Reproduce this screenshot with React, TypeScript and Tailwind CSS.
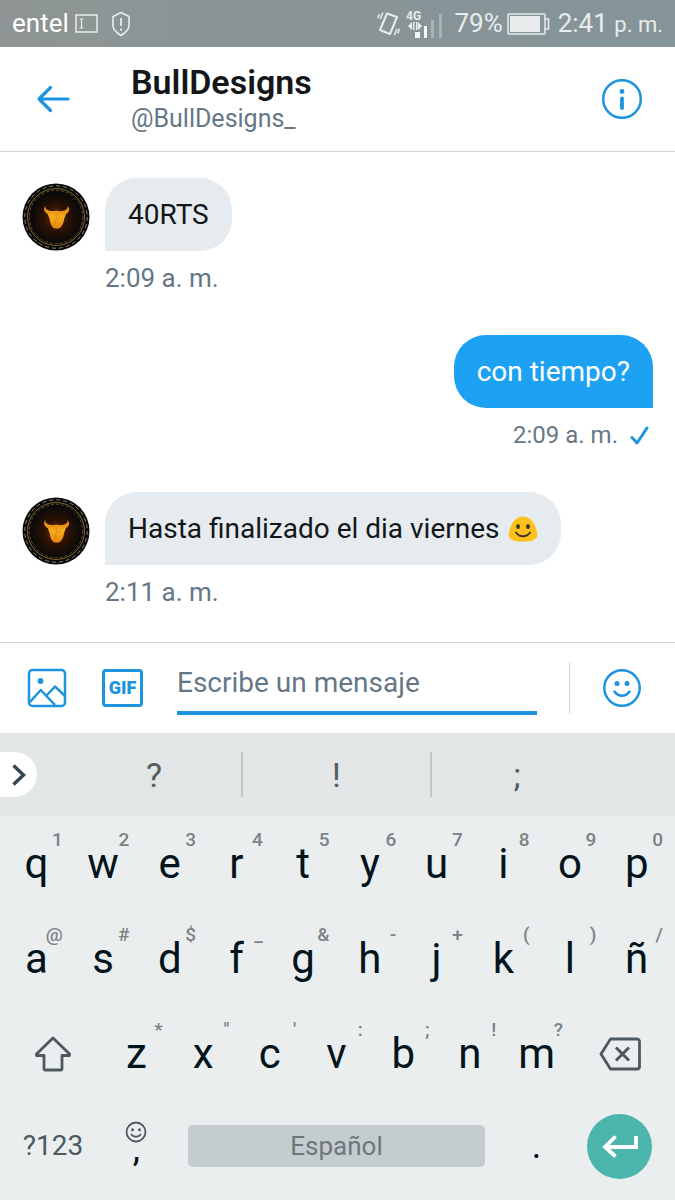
import type { ReactNode } from "react";

interface Message {
  id: number
  text: string
  time: string
  mine?: boolean
  emoji?: boolean
}

interface KeyData {
  label: string
  hint: string
}

const messages: Message[] = [
  { id: 1, text: "40RTS", time: "2:09 a. m." },
  { id: 2, text: "con tiempo?", time: "2:09 a. m.", mine: true },
  { id: 3, text: "Hasta finalizado el dia viernes", time: "2:11 a. m.", emoji: true },
];

const toKeys = (letters: string, hints: string): KeyData[] =>
  letters.split("").map((label, i) => ({ label, hint: hints[i] }));

const row1 = toKeys("qwertyuiop", "1234567890");
const row2 = toKeys("asdfghjklñ", "@#$_&-+()/");
const row3 = toKeys("zxcvbnm", "*\"':;!?");

const StatusBar = () => (
  <div className="flex h-[47px] items-center justify-between bg-linear-to-r from-[#8e9594] to-[#849499] px-3 text-[26px] text-[#e8ecec]">
    <div className="flex items-center">
      <span className="text-white">entel</span>
      <svg className="ml-1.5" width="24" height="20" viewBox="0 0 24 20" fill="none" stroke="#e8ecec" strokeWidth="1.5">
        <rect x="1" y="1" width="21" height="17" />
        <path d="M4.5 5h4M4.5 14h4M6.5 5v9" strokeWidth="1.2" />
      </svg>
      <svg className="ml-3" width="20" height="26" viewBox="0 0 20 26" fill="none" stroke="#e8ecec" strokeWidth="1.6">
        <path d="M10 1.5 18 5.5V15c0 4-4 7-8 9.500C6 22 2 19 2 15V5.500Z" strokeLinejoin="round" />
        <path d="M10 7v8M10 17.5v2.2" strokeWidth="1.8" />
      </svg>
    </div>
    <div className="flex items-center">
      <svg width="23" height="26" viewBox="0 0 23 26" fill="none" stroke="#e8ecec" strokeWidth="1.5">
        <path d="M10 2.500 20 6 13 23 3 19Z" strokeWidth="2" strokeLinejoin="round" />
        <path d="M6 1.500 3 8M2.500 3 .8 7M20 18l-2.500 6M22.500 17.500l-1.700 5" />
      </svg>
      <svg className="ml-1.5" width="36" height="30" viewBox="0 0 36 30">
        <text x="0" y="11" fontSize="12" fontWeight="700" fill="#e8ecec">4G</text>
        <path d="m2 17 4-4v8ZM7 13h1.500v8H7ZM10 13h1.500v8H10Zm2 0 4 4-4 4Z" fill="#e8ecec" />
        <path d="M9 23h5v6H9ZM18 17h3v12h-3Z" fill="#f4f6f6" />
        <path d="M25 11h3v18h-3ZM33 5h3v24h-3Z" fill="#a9b3b5" />
      </svg>
      <span className="ml-3">79%</span>
      <svg className="ml-1" width="43" height="22" viewBox="0 0 43 22">
        <rect x="1" y="1" width="37" height="20" rx="1" fill="none" stroke="#e8ecec" strokeWidth="1.5" />
        <rect x="3" y="3" width="30" height="16" fill="#e8ecec" />
        <path d="M38 6h3.500v10H38" fill="none" stroke="#e8ecec" strokeWidth="1.5" />
      </svg>
      <span className="ml-2">2:41 <span className="text-[22px]">p. m.</span></span>
    </div>
  </div>
);

const Header = () => (
  <header className="flex h-[105px] items-center border-b border-[#ccd6dd] bg-white pr-8 pl-9">
    <button type="button" aria-label="Atrás">
      <svg width="34" height="28" viewBox="0 0 34 28" fill="none" stroke="#1d94dd" strokeWidth="3.2" strokeLinecap="round" strokeLinejoin="round">
        <path d="M32 14H3M14.500 2.500 3 14l11.500 11.500" />
      </svg>
    </button>
    <div className="ml-[61px] flex-1">
      <h1 className="text-[34px] leading-10 font-semibold text-[#14171a]">BullDesigns</h1>
      <p className="text-[25px] leading-[34px] text-[#657786]">@BullDesigns_</p>
    </div>
    <button type="button" aria-label="Información">
      <svg width="42" height="42" viewBox="0 0 42 42" fill="none" stroke="#1d94dd" strokeLinecap="round">
        <circle cx="21" cy="21" r="18.8" strokeWidth="2.5" />
        <path d="M21 20.500v9.500" strokeWidth="3.8" />
        <circle cx="21" cy="13.5" r="2.4" fill="#1d94dd" stroke="none" />
      </svg>
    </button>
  </header>
);

const Avatar = () => (
  <svg className="shrink-0" width="68" height="68" viewBox="0 0 68 68">
    <defs>
      <radialGradient id="glow">
        <stop offset="0" stopColor="#7a2e02" />
        <stop offset="0.5" stopColor="#2c1204" />
        <stop offset="1" stopColor="#0d0b09" />
      </radialGradient>
      <linearGradient id="gold" x1="0" y1="0" x2="0" y2="1">
        <stop offset="0" stopColor="#d9780f" />
        <stop offset="0.5" stopColor="#f7ac1d" />
        <stop offset="1" stopColor="#e5850f" />
      </linearGradient>
    </defs>
    <circle cx="34" cy="34" r="33.5" fill="#0b0a0a" />
    <circle cx="34" cy="34" r="31.2" fill="none" stroke="#8d8468" strokeWidth="1" strokeDasharray="4 3" />
    <circle cx="34" cy="34" r="28.5" fill="none" stroke="#8a7130" strokeWidth="0.9" />
    <circle cx="34" cy="34" r="26.7" fill="none" stroke="#77602a" strokeWidth="0.8" strokeDasharray="3 2" />
    <circle cx="34" cy="35" r="24" fill="url(#glow)" />
    <path d="M24 22.500c-1.500 2 0 4.500 4.500 5.500 2 .3 4 0 6-.5 2 .5 4 .8 6 .5 4.500-1 6-3.500 4.500-5.500 3.500 3 2.500 6.500-1 8.500-.8 2.500-1.800 4-2 6-.5 3-2 5.500-3.500 7.500-1 1.500-6.500 1.500-7.500 0-1.500-2-3-4.500-3.200-7.500-.2-2-1.200-3.500-2.200-6-3.500-2-5-5.500-1.600-8.500Z" fill="url(#gold)" />
    <path d="m34 31 1 5 3-2M34 36l-1 7" fill="none" stroke="#d27a10" strokeWidth="0.6" />
  </svg>
);

const BlobSmile = () => (
  <svg className="ml-2" width="30" height="26" viewBox="0 0 30 26">
    <path d="M15 .5C8 .5 3.500 6 1 16c-1.500 7 3 9.500 14 9.500S30.500 23 29 16C26.500 6 22 .5 15 .5Z" fill="#fcc21b" />
    <ellipse cx="10" cy="10.5" rx="2" ry="2.5" fill="#45352c" />
    <ellipse cx="20" cy="10.5" rx="2" ry="2.5" fill="#45352c" />
    <path d="M8 16.500c3.500 5 10.500 5 14 0" fill="none" stroke="#45352c" strokeWidth="2" strokeLinecap="round" />
  </svg>
);

const Incoming = ({ message }: { message: Message }) => (
  <li>
    <div className="flex items-end gap-[15px]">
      <Avatar />
      <div className="flex h-[73px] items-center rounded-[32px] rounded-bl-none bg-[#e5ebee] px-[23px] text-[28px] text-[#14171a]">
        <span>{message.text}</span>
        {message.emoji && <BlobSmile />}
      </div>
    </div>
    <p className="mt-3 ml-[83px] text-[26px] leading-[30px] text-[#657786]">{message.time}</p>
  </li>
);

const Outgoing = ({ message }: { message: Message }) => (
  <li className="flex flex-col items-end">
    <div className="flex h-[73px] items-center rounded-[32px] rounded-br-none bg-[#1da1f2] px-[23px] text-[28px] text-white">
      {message.text}
    </div>
    <p className="mt-3 flex items-center gap-3 pr-1 text-2xl leading-[30px] text-[#657786]">
      {message.time}
      <svg width="19" height="19" viewBox="0 0 19 19" fill="none" stroke="#1d94dd" strokeWidth="3" strokeLinecap="round" strokeLinejoin="round">
        <path d="m2 11.500 5 5.500L17 2" />
      </svg>
    </p>
  </li>
);

const Composer = () => (
  <form className="flex h-[91px] items-center border-t border-[#ccd6dd] bg-white pr-8 pl-[27px]">
    <button type="button" aria-label="Foto">
      <svg width="40" height="40" viewBox="0 0 40 40" fill="none" stroke="#1d94dd" strokeWidth="2.5" strokeLinejoin="round">
        <rect x="2" y="2" width="36" height="36" rx="3.5" />
        <circle cx="13.5" cy="13" r="2.9" fill="#1d94dd" stroke="none" />
        <path d="M3 34 13.700 22 28 37M20 27l8-8.500 9.500 9" />
      </svg>
    </button>
    <button type="button" aria-label="GIF" className="ml-[35px] flex h-[38px] w-[41px] items-center justify-center rounded-[4px] border-[3px] border-[#1d94dd] text-lg font-black text-[#1d94dd]">
      GIF
    </button>
    <input
      type="text"
      aria-label="Mensaje"
      placeholder="Escribe un mensaje"
      className="ml-[34px] h-[54px] min-w-0 flex-1 border-b-4 border-[#1d94dd] pb-2 text-[28px] text-[#14171a] outline-none placeholder:text-[#657786]"
    />
    <div className="ml-8 h-[52px] w-px bg-[#ccd6dd]" />
    <button type="button" aria-label="Emoji" className="ml-[31px]">
      <svg width="42" height="42" viewBox="0 0 42 42" fill="none" stroke="#1d94dd" strokeWidth="2.5" strokeLinecap="round">
        <circle cx="21" cy="21" r="17.7" />
        <circle cx="16" cy="16.5" r="2.5" fill="#1d94dd" stroke="none" />
        <circle cx="26" cy="16.5" r="2.5" fill="#1d94dd" stroke="none" />
        <path d="M13.500 24.500c3.500 5.500 11.500 5.500 15 0" />
      </svg>
    </button>
  </form>
);

const Suggestions = () => (
  <div className="flex h-[83px] items-center bg-[#e2e6e7] pr-[73px] text-[34px] text-[#565d60]">
    <button type="button" aria-label="Más" className="flex h-[45px] w-[37px] items-center rounded-r-full bg-white pl-3">
      <svg width="15" height="22" viewBox="0 0 15 22" fill="none" stroke="#37474f" strokeWidth="3.5">
        <path d="m1.500 1.500 10 9.500-10 9.500" />
      </svg>
    </button>
    <div className="ml-[30px] grid h-[45px] flex-1 grid-cols-[174fr_191fr_170fr] leading-none">
      <button type="button">?</button>
      <button type="button" className="border-x-2 border-[#c0c7c9]">!</button>
      <button type="button">;</button>
    </div>
  </div>
);

const Key = ({ label, hint }: KeyData) => (
  <button type="button" className="relative flex flex-2 basis-0 items-center justify-center text-[42px] leading-none text-[#04141c]">
    {label}
    <span className="absolute top-3.5 right-[7px] text-[19px] leading-5 font-medium text-[#7b8386]">{hint}</span>
  </button>
);

const SideKey = ({ label, children }: { label: string; children: ReactNode }) => (
  <button type="button" aria-label={label} className="flex flex-3 basis-0 items-center justify-center text-[28px] text-[#4d595e]">
    {children}
  </button>
);

const Keyboard = () => (
  <div className="bg-[#eaeeef] pr-[5px] pb-[9px] pl-[3px]">
    <div className="flex h-[95px]">
      {row1.map((k) => <Key key={k.label} {...k} />)}
    </div>
    <div className="flex h-[95px]">
      {row2.map((k) => <Key key={k.label} {...k} />)}
    </div>
    <div className="flex h-[95px]">
      <SideKey label="Mayúsculas">
        <svg width="38" height="36" viewBox="0 0 38 36" fill="none" stroke="#4d595e" strokeWidth="2.8" strokeLinejoin="round">
          <path d="M19 2 2.500 18v1.500H10V33a1 1 0 0 0 1 1h16a1 1 0 0 0 1-1V19.500h7.500V18Z" />
        </svg>
      </SideKey>
      {row3.map((k) => <Key key={k.label} {...k} />)}
      <SideKey label="Borrar">
        <svg width="42" height="34" viewBox="0 0 42 34" fill="none" stroke="#4d595e" strokeWidth="2.8" strokeLinejoin="round">
          <path d="M11.500 2H38a2.500 2.500 0 0 1 2.500 2.500v25A2.500 2.500 0 0 1 38 32H11.500L2 17Z" />
          <path d="m17 10.500 13 13M30 10.500l-13 13" strokeWidth="3" />
        </svg>
      </SideKey>
    </div>
    <div className="flex h-[90px]">
      <SideKey label="?123">?123</SideKey>
      <button type="button" aria-label="Coma" className="flex flex-2 basis-0 flex-col items-center pt-5 text-4xl text-[#04141c]">
        <svg className="shrink-0" width="22" height="22" viewBox="0 0 22 22" fill="none" stroke="#4d595e" strokeWidth="1.8" strokeLinecap="round">
          <circle cx="11" cy="11" r="9.5" />
          <circle cx="7.5" cy="8.8" r="1.5" fill="#4d595e" stroke="none" />
          <circle cx="14.5" cy="8.8" r="1.5" fill="#4d595e" stroke="none" />
          <path d="M6.500 13.500c2 3 7 3 9 0" />
        </svg>
        <span className="leading-3">,</span>
      </button>
      <div className="flex flex-10 basis-0 items-center">
        <button type="button" className="mx-[18px] h-[42px] flex-1 rounded-[5px] bg-[#c5cccf] text-[26px] text-[#6d777b]">
          Español
        </button>
      </div>
      <button type="button" className="flex flex-2 basis-0 items-center justify-center text-4xl text-[#04141c]">.</button>
      <SideKey label="Intro">
        <span className="flex size-[65px] items-center justify-center rounded-full bg-[#4db6ac]">
          <svg width="36" height="24" viewBox="0 0 36 24" fill="none" stroke="#fff" strokeWidth="3.8">
            <path d="M34 2v11H3M13.500 2.500 3 13l10.500 9.500" />
          </svg>
        </span>
      </SideKey>
    </div>
  </div>
);

const App = () => {
  return (
    <div className="flex min-h-screen flex-col bg-white font-['Roboto',sans-serif]">
      <StatusBar />
      <Header />
      <ul className="flex flex-1 flex-col gap-[42px] px-[22px] pt-[26px] pb-[35px]">
        {messages.map((m) =>
          m.mine ? <Outgoing key={m.id} message={m} /> : <Incoming key={m.id} message={m} />
        )}
      </ul>
      <Composer />
      <Suggestions />
      <Keyboard />
    </div>
  )
}

export default App
